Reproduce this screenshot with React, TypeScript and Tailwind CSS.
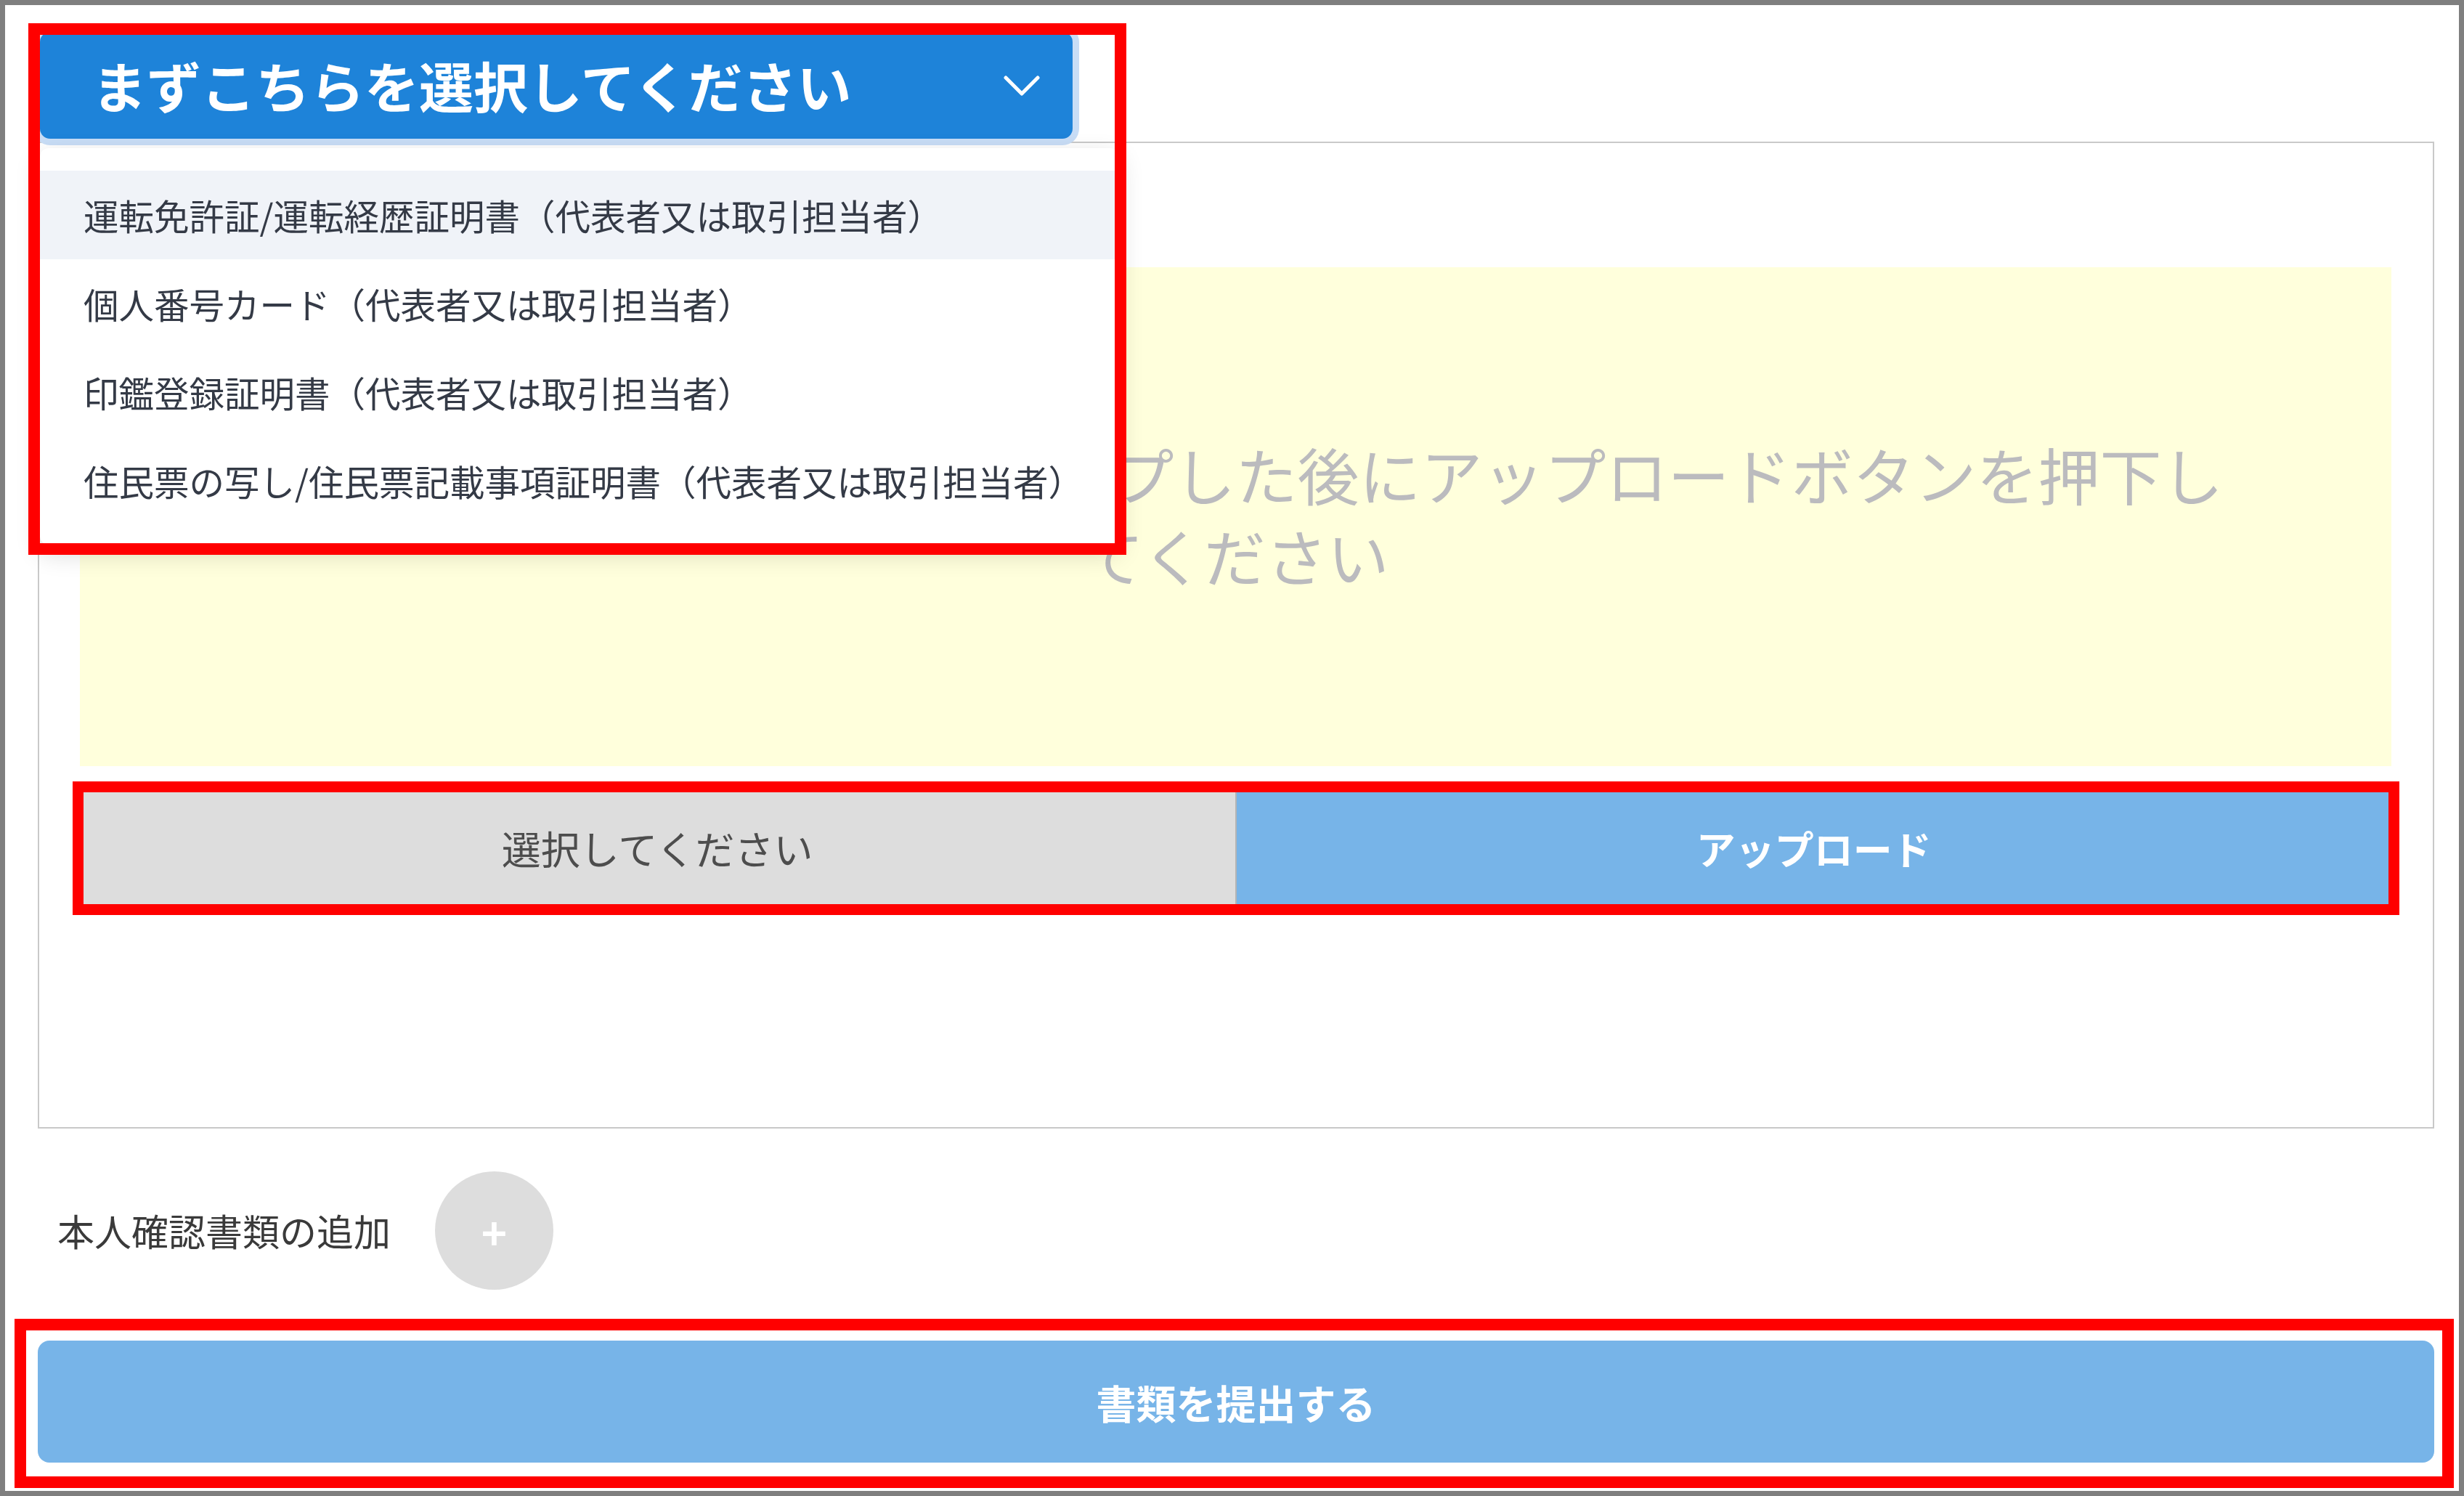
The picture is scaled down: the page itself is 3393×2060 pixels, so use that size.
import React from 'react';

const documentTypes = [
  '運転免許証/運転経歴証明書（代表者又は取引担当者）',
  '個人番号カード（代表者又は取引担当者）',
  '印鑑登録証明書（代表者又は取引担当者）',
  '住民票の写し/住民票記載事項証明書（代表者又は取引担当者）',
];

export default function App() {
  return (
    <div className="relative h-[2060px] w-[3393px] overflow-hidden border-[7px] border-[#7f7f7f] bg-white font-['Noto_Sans_CJK_JP','Noto_Sans',sans-serif]">
      <div className="pl-[45px] pr-[34px] pt-[37px]">
        {/* Document type select (open) */}
        <div className="relative z-20 ml-[3px] w-[1422px]">
          <button className="flex h-[147px] w-full items-center justify-between rounded-[14px] bg-[#1e83d9] pl-[72px] pr-[45px] text-[75px] font-bold text-white shadow-[0_0_0_9px_#c8ddf6]">
            <span>まずこちらを選択してください</span>
            <svg width="50" height="28" viewBox="0 0 50 28" fill="none">
              <polyline points="3,3 25,25 47,3" stroke="white" strokeWidth="5" strokeLinecap="round" strokeLinejoin="round" />
            </svg>
          </button>
          <div className="absolute left-0 top-[160px] w-[1486px] rounded-[12px] bg-white pt-[31px] pb-[27px] shadow-[0_12px_34px_rgba(0,0,0,0.16)]">
            {documentTypes.map((label, i) => (
              <div
                key={label}
                className={
                  i === 0
                    ? 'flex h-[122px] items-center bg-[#f0f3f8] px-[60px] text-[48.5px] text-[#343a46]'
                    : 'flex h-[122px] items-center px-[60px] text-[48.5px] text-[#343a46]'
                }
              >
                {label}
              </div>
            ))}
          </div>
        </div>

        {/* Upload card */}
        <div className="mt-[4px] h-[1359px] border-2 border-[#c9c9c9] pl-[56px] pr-[57px] pt-[171px]">
          <div className="flex h-[687px] items-center justify-center bg-[#ffffdc] pb-[8px] text-center text-[85px] leading-[112px] text-[#bbbbbe]">
            <p>
              画像をここにドラッグ＆ドロップした後にアップロードボタンを押下し
              <br />
              てください
            </p>
          </div>
          <div className="mt-[28px] flex h-[168px]">
            <button className="flex flex-1 items-center justify-center border-r-2 border-[#b4b4b4] bg-[#dddddd] text-[54px] text-[#4d4d4d]">
              選択してください
            </button>
            <button className="flex flex-1 items-center justify-center rounded-tl-[4px] bg-[#77b4e8] text-[54px] font-bold text-white">
              アップロード
            </button>
          </div>
        </div>

        {/* Add another document */}
        <div className="mt-[59px] flex items-center gap-[61px] pl-[27px]">
          <span className="text-[51px] text-[#3a3a3a]">本人確認書類の追加</span>
          <button className="flex h-[163px] w-[163px] items-center justify-center rounded-full bg-[#dddddd] text-[60px] font-bold leading-none text-white">
            +
          </button>
        </div>

        {/* Submit */}
        <button className="mt-[70px] flex h-[168px] w-full items-center justify-center rounded-[16px] bg-[#77b4e8] text-[55px] font-bold text-white">
          書類を提出する
        </button>
      </div>

      {/* Red annotation frames */}
      <div className="pointer-events-none absolute left-[32px] top-[25px] z-30 h-[732px] w-[1512px] border-[16px] border-[#ff0000]" />
      <div className="pointer-events-none absolute left-[93px] top-[1069px] z-30 h-[184px] w-[3204px] border-[15px] border-[#ff0000]" />
      <div className="pointer-events-none absolute left-[13px] top-[1809px] z-30 h-[233px] w-[3359px] border-[16px] border-[#ff0000]" />
    </div>
  );
}
